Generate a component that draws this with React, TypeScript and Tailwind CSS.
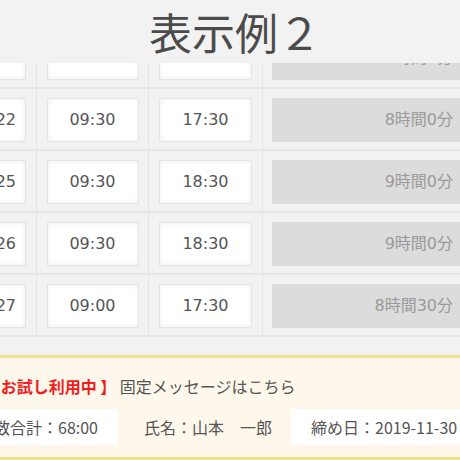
import React from 'react';

const rows = [
  { day: '11/21', start: '09:30', end: '17:30', total: '8時間0分' },
  { day: '11/22', start: '09:30', end: '17:30', total: '8時間0分' },
  { day: '11/25', start: '09:30', end: '18:30', total: '9時間0分' },
  { day: '11/26', start: '09:30', end: '18:30', total: '9時間0分' },
  { day: '11/27', start: '09:00', end: '17:30', total: '8時間30分' },
];

const cellFont = { fontFamily: '"DejaVu Sans", "Noto Sans CJK JP", sans-serif' };
const jpFont = { fontFamily: '"Noto Sans CJK JP", sans-serif' };

const TimeBox: React.FC<{ value: string; w: string }> = ({ value, w }) => (
  <div
    className={`${w} h-[44px] flex items-center justify-center bg-white border border-[#e4e4e4] shadow-[inset_0_0_5px_rgba(0,0,0,0.07)] text-[16px] text-[#555]`}
  >
    {value}
  </div>
);

const Row: React.FC<{ r: (typeof rows)[number] }> = ({ r }) => (
  <div className="flex flex-none h-[62px] border-b-2 border-[#e6e6e6]" style={cellFont}>
    <div className="w-[86px] flex-none flex justify-end pt-[9px] pr-[10px] border-r border-[#e4e4e4]">
      <TimeBox value={r.day} w="w-[66px]" />
    </div>
    <div className="w-[112px] flex-none flex justify-center pt-[9px] border-r border-[#e4e4e4]">
      <TimeBox value={r.start} w="w-[92px]" />
    </div>
    <div className="w-[114px] flex-none flex justify-center pt-[9px] border-r border-[#e4e4e4]">
      <TimeBox value={r.end} w="w-[93px]" />
    </div>
    <div className="flex-none pt-[9px] pl-[9px]">
      <div className="w-[220px] h-[44px] flex items-center justify-end pr-[39px] bg-[#dcdcdc] text-[16px] text-[#9a9a9a]">
        {r.total}
      </div>
    </div>
  </div>
);

export default function App() {
  return (
    <div className="w-[460px] h-[460px] overflow-hidden bg-[#f2f2f2]">
      {/* Header */}
      <div className="h-[63px] flex items-center justify-center pl-[10px] bg-[#f2f2f2]" style={jpFont}>
        <h1 className="text-[43px] leading-none text-[#4b4b4b]">表示例２</h1>
      </div>

      {/* Table: first row scrolled mostly under the header */}
      <div className="ml-[-49px] w-[560px]">
        <div className="h-[26px] overflow-hidden flex flex-col justify-end">
          <Row r={rows[0]} />
        </div>
        {rows.slice(1).map((r) => (
          <Row key={r.day} r={r} />
        ))}
      </div>

      {/* Footer bar */}
      <div
        className="mt-[18px] border-y-[3px] border-[#eee38c] bg-[#fdf8eb] pt-[16px] pb-[12px] whitespace-nowrap"
        style={jpFont}
      >
        <div className="ml-[-19px] h-[24px] leading-[24px] text-[16px] text-[#555]">
          <span className="font-bold text-[#f01e1e]">【 お試し利用中 】</span>
          <span> 固定メッセージはこちら</span>
        </div>
        <div className="mt-[11px] h-[36px] flex text-[16px] text-[#555]">
          <div className="ml-[-40px] w-[158px] flex-none flex items-center justify-end pr-5 bg-white">
            総時間数合計：68:00
          </div>
          <div className="flex-none flex items-center pl-[26px] pr-[19px]">氏名：山本　一郎</div>
          <div className="flex-1 flex items-center pl-5 bg-white">締め日：2019-11-30</div>
        </div>
      </div>
    </div>
  );
}
